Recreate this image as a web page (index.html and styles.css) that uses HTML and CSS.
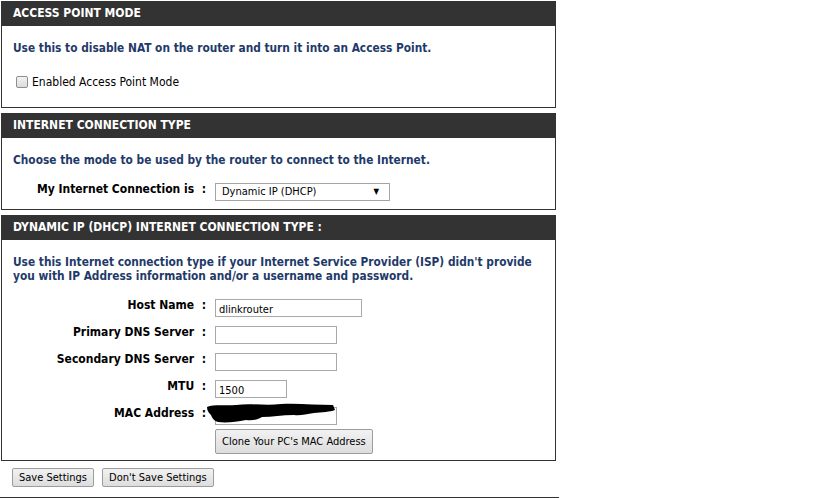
FILE: index.html
```html
<!DOCTYPE html>
<html lang="en">
<head>
    <meta charset="UTF-8">
    <meta name="viewport" content="width=device-width, initial-scale=1.0">
    <title>Internet Connection</title>
    <link rel="stylesheet" href="styles.css">
</head>
<body>
    <div class="page">
        <div class="box">
            <h2>ACCESS POINT MODE</h2>
            <div class="box-body ap">
                <p class="intro">Use this to disable NAT on the router and turn it into an Access Point.</p>
                <label class="check"><span class="checkbox"></span>Enabled Access Point Mode</label>
            </div>
        </div>

        <div class="box">
            <h2>INTERNET CONNECTION TYPE</h2>
            <div class="box-body conn">
                <p class="intro">Choose the mode to be used by the router to connect to the Internet.</p>
                <div class="form-grid">
                    <span class="field-label">My Internet Connection is&nbsp;&nbsp;:</span>
                    <div class="select">Dynamic IP (DHCP)<span class="arrow">&#9660;</span></div>
                </div>
            </div>
        </div>

        <div class="box">
            <h2>DYNAMIC IP (DHCP) INTERNET CONNECTION TYPE :</h2>
            <div class="box-body dhcp">
                <p class="intro">Use this Internet connection type if your Internet Service Provider (ISP) didn't provide you with IP Address information and/or a username and password.</p>
                <div class="form-grid rows">
                    <span class="field-label">Host Name&nbsp;&nbsp;:</span>
                    <div><input class="text long" type="text" value="dlinkrouter"></div>

                    <span class="field-label">Primary DNS Server&nbsp;&nbsp;:</span>
                    <div><input class="text" type="text"></div>

                    <span class="field-label">Secondary DNS Server&nbsp;&nbsp;:</span>
                    <div><input class="text" type="text"></div>

                    <span class="field-label">MTU&nbsp;&nbsp;:</span>
                    <div><input class="text short" type="text" value="1500"></div>

                    <span class="field-label">MAC Address&nbsp;&nbsp;:</span>
                    <div class="mac">
                        <input class="text" type="text">
                        <!-- redacted address -->
                        <svg class="scribble" width="130" height="22" viewBox="0 0 130 22">
                            <path d="M1 4 C8 1 20 3 30 2 C45 0 60 3 75 1 C92 0 110 2 127 2 L129 7 C124 9 116 9 108 10 C100 11 94 13 88 12 C76 12 66 14 56 14 C52 16 48 18 40 17 C30 19 20 20 12 19 C8 18 6 15 5 12 C3 10 1 8 1 4 Z" fill="#000"/>
                        </svg>
                    </div>

                    <span></span>
                    <div><button class="btn tall" type="button">Clone Your PC's MAC Address</button></div>
                </div>
            </div>
        </div>

        <div class="actions">
            <button class="btn" type="button">Save Settings</button>
            <button class="btn" type="button">Don't Save Settings</button>
        </div>
        <div class="rule"></div>
    </div>
</body>
</html>
```

FILE: styles.css
```css
body {
    font-family: "DejaVu Sans Condensed", "DejaVu Sans", sans-serif;
    font-stretch: condensed;
    font-size: 12px;
    background-color: #ffffff;
    color: #000000;
    margin: 0;
    padding: 1px 0 0 0;
}
.page {
    width: 559px;
}
.box {
    width: 553px;
    margin-left: 1px;
    margin-bottom: 5px;
    border: 1px solid #333333;
    border-top: none;
}
.box h2 {
    margin: 0;
    height: 25px;
    line-height: 25px;
    padding-left: 11px;
    background-color: #333333;
    color: #ffffff;
    font-size: 12px;
    font-weight: bold;
}
.box-body {
    padding: 0 11px;
}
.intro {
    margin: 0;
    color: #1f3a6a;
    font-weight: bold;
    font-size: 11.8px;
    line-height: 14px;
}
.ap {
    padding-top: 15px;
    padding-bottom: 18px;
}
.check {
    display: flex;
    align-items: center;
    margin-top: 20px;
    margin-left: 3px;
    height: 14px;
}
.checkbox {
    width: 10px;
    height: 10px;
    margin-right: 4px;
    border: 1px solid #8f8f8f;
    border-radius: 2px;
    background: linear-gradient(#f4f4f4, #dcdcdc);
}
.conn {
    padding-top: 15px;
    padding-bottom: 8px;
}
.form-grid {
    display: grid;
    grid-template-columns: 193px auto;
    column-gap: 9px;
    margin-top: 16px;
}
.field-label {
    text-align: right;
    font-weight: bold;
    line-height: 14px;
    margin-top: -1px;
}
.select {
    position: relative;
    width: 167px;
    height: 16px;
    line-height: 16px;
    padding-left: 6px;
    border: 1px solid #a5a5a5;
    font-size: 11px;
}
.arrow {
    position: absolute;
    right: 10px;
    top: 0;
    font-size: 8px;
}
.dhcp {
    padding-top: 15px;
    padding-bottom: 6px;
}
.rows {
    row-gap: 9px;
}
.text {
    display: block;
    box-sizing: border-box;
    width: 122px;
    height: 18px;
    margin: 0;
    padding: 2px 3px 0;
    border: 1px solid #a9a9a9;
    font-family: inherit;
    font-size: 11px;
}
.text.long {
    width: 147px;
}
.text.short {
    width: 72px;
}
.mac {
    position: relative;
}
.scribble {
    position: absolute;
    left: -9px;
    top: -4px;
}
.rows .btn.tall {
    margin-top: -6px;
    height: 25px;
    padding: 0 6px;
}
.btn {
    height: 19px;
    padding: 0 6px;
    border: 1px solid #9c9c9c;
    border-radius: 2px;
    background: linear-gradient(#f2f2f2, #dddddd);
    font-family: inherit;
    font-size: 11px;
    color: #000000;
}
.actions {
    display: flex;
    gap: 8px;
    padding: 2px 0 0 12px;
}
.rule {
    margin-top: 10px;
    height: 2px;
    background-color: #333333;
}
```
